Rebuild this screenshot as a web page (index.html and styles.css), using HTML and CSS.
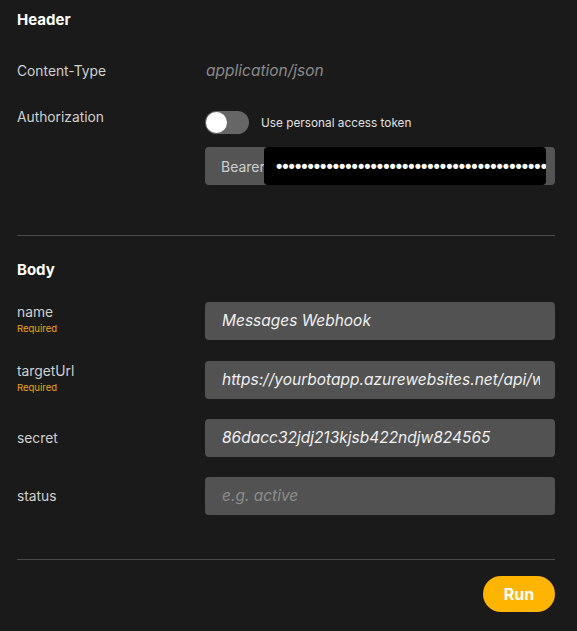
FILE: index.html
```html
<!DOCTYPE html>
<html>
<head>
<meta charset="utf-8">
<link rel="stylesheet" href="styles.css">
</head>
<body>
<div class="panel">
  <section class="section header-section">
    <h2 class="title">Header</h2>
    <div class="row row-ct">
      <div class="label">Content-Type</div>
      <div class="static-value">application/json</div>
    </div>
    <div class="row row-auth">
      <div class="label">Authorization</div>
      <div class="field">
        <div class="toggle-line">
          <span class="toggle"><span class="knob"></span></span>
          <span class="toggle-text">Use personal access token</span>
        </div>
        <div class="bearer">
          <span class="bearer-text">Bearer</span>
          <div class="mask"><span class="dots">••••••••••••••••••••••••••••••••••••••••••••••••</span></div>
        </div>
      </div>
    </div>
  </section>
  <hr class="divider divider-1">
  <section class="section body-section">
    <h2 class="title">Body</h2>
    <div class="row row-field row-req">
      <div class="label-block"><div class="label">name</div><div class="required">Required</div></div>
      <div class="input"><span class="input-text">Messages Webhook</span></div>
    </div>
    <div class="row row-field row-req row-second">
      <div class="label-block"><div class="label">targetUrl</div><div class="required">Required</div></div>
      <div class="input input-url"><span class="input-text">https://yourbotapp.azurewebsites.net/api/webhooks</span></div>
    </div>
    <div class="row row-field">
      <div class="label-block"><div class="label">secret</div></div>
      <div class="input"><span class="input-text">86dacc32jdj213kjsb422ndjw824565</span></div>
    </div>
    <div class="row row-field">
      <div class="label-block"><div class="label">status</div></div>
      <div class="input placeholder"><span class="input-text">e.g. active</span></div>
    </div>
  </section>
  <hr class="divider divider-2">
  <div class="actions"><button class="run">Run</button></div>
</div>
</body>
</html>
```
FILE: styles.css
```css
html, body {
  margin: 0;
  padding: 0;
  background: #1a1a1a;
  font-family: Inter, "Liberation Sans", Arial, sans-serif;
  color: #d4d4d4;
}
.panel {
  padding: 10px 22px 0 17px;
}
.title {
  margin: 0;
  font-size: 15px;
  line-height: 20px;
  font-weight: bold;
  color: #ffffff;
}
.row {
  display: grid;
  grid-template-columns: 188px minmax(0, 1fr);
}
.label {
  font-size: 13.8px;
  line-height: 20px;
  color: #d0d0d0;
}
.row-ct {
  margin-top: 31px;
}
.static-value {
  font-size: 15.5px;
  line-height: 20px;
  font-style: italic;
  color: #8a8a8a;
  padding-left: 1px;
}
.row-auth {
  margin-top: 26px;
}
.toggle-line {
  display: flex;
  align-items: center;
  margin-top: 4px;
  height: 23px;
}
.toggle {
  position: relative;
  width: 44px;
  height: 23px;
  border-radius: 12px;
  background: #666666;
  display: inline-block;
}
.knob {
  position: absolute;
  left: 1px;
  top: 1px;
  width: 21px;
  height: 21px;
  border-radius: 50%;
  background: #ffffff;
}
.toggle-text {
  margin-left: 12px;
  font-size: 11.8px;
  color: #e0e0e0;
}
.bearer {
  position: relative;
  margin-top: 13px;
  height: 38px;
  border-radius: 4px;
  background: #545454;
  display: flex;
  align-items: center;
  padding-left: 16px;
}
.bearer-text {
  font-size: 14px;
  color: #cfcfcf;
}
.mask {
  position: absolute;
  left: 59px;
  right: 9px;
  top: 0;
  bottom: 0;
  background: #000000;
  border-radius: 4px;
  overflow: hidden;
  white-space: nowrap;
  display: flex;
  align-items: center;
  padding-left: 12px;
}
.dots {
  color: #ffffff;
  font-family: "Liberation Sans", Arial, sans-serif;
  font-size: 18px;
  letter-spacing: 0;
  font-weight: bold;
}
.divider {
  border: 0;
  height: 1px;
  background: #4a4a4a;
  margin: 0;
}
.divider-1 {
  margin-top: 50px;
}
.body-section {
  padding-top: 24px;
}
.row-field {
  align-items: center;
  margin-top: 20px;
}
.row-req {
  align-items: start;
}
.row-second {
  margin-top: 21px;
}
.body-section .title + .row-field {
  margin-top: 22px;
}
.required {
  font-size: 9.5px;
  line-height: 12px;
  color: #e8a800;
  margin-top: 1px;
}
.input {
  min-width: 0;
  height: 38px;
  line-height: 38px;
  border-radius: 4px;
  background: #525252;
  padding: 0 10px 0 17px;
  font-size: 15.5px;
  font-style: italic;
  color: #efefef;
}
.input-text {
  display: block;
  white-space: nowrap;
  overflow: hidden;
}
.input-url {
  padding-right: 15px;
}
.input.placeholder {
  color: #8c8c8c;
}
.divider-2 {
  margin-top: 44px;
}
.actions {
  display: flex;
  justify-content: flex-end;
  margin-top: 16px;
}
.run {
  width: 72px;
  height: 36px;
  border: 0;
  border-radius: 18px;
  background: #ffb400;
  color: #ffffff;
  font-family: Inter, "Liberation Sans", Arial, sans-serif;
  font-size: 16px;
  font-weight: bold;
  padding: 0;
}
```
